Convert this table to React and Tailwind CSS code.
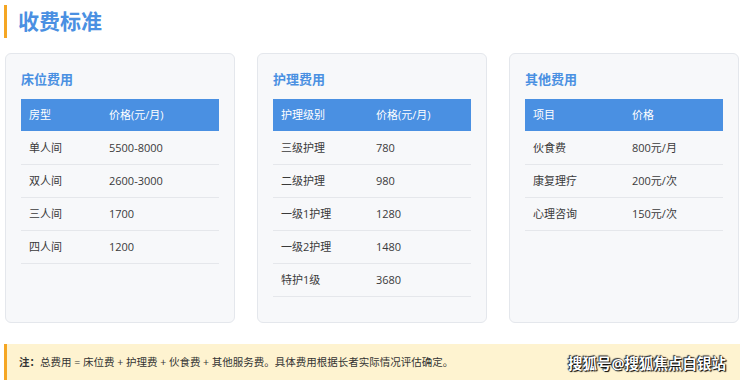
import React from 'react';

const font = { fontFamily: '"Open Sans", "Noto Sans CJK SC", sans-serif' };

const cards = [
  {
    title: '床位费用',
    cols: ['房型', '价格(元/月)'],
    colWidth: 'w-[80px]',
    rows: [
      ['单人间', '5500-8000'],
      ['双人间', '2600-3000'],
      ['三人间', '1700'],
      ['四人间', '1200'],
    ],
  },
  {
    title: '护理费用',
    cols: ['护理级别', '价格(元/月)'],
    colWidth: 'w-[95px]',
    rows: [
      ['三级护理', '780'],
      ['二级护理', '980'],
      ['一级1护理', '1280'],
      ['一级2护理', '1480'],
      ['特护1级', '3680'],
    ],
  },
  {
    title: '其他费用',
    cols: ['项目', '价格'],
    colWidth: 'w-[99px]',
    rows: [
      ['伙食费', '800元/月'],
      ['康复理疗', '200元/次'],
      ['心理咨询', '150元/次'],
    ],
  },
];

const FeeCard = ({ card }) => (
  <div className="w-[230px] bg-[#f7f8fa] border border-[#e4e7ec] rounded-md px-[15px] pt-[16px] pb-[25px]">
    <h3 className="text-[13px] leading-[18px] font-bold text-[#4a90e2] mb-[11px]">{card.title}</h3>
    <table className="w-full border-collapse text-[11px]">
      <thead>
        <tr className="bg-[#4a90e2] text-white h-[32px]">
          <th className={`${card.colWidth} text-left font-normal pl-2`}>{card.cols[0]}</th>
          <th className="text-left font-normal pl-2">{card.cols[1]}</th>
        </tr>
      </thead>
      <tbody>
        {card.rows.map(r => (
          <tr key={r[0]} className="h-[33px] border-b border-[#e5e7eb] text-[#3a3a3a]">
            <td className="pl-2 pt-[2px]">{r[0]}</td>
            <td className="pl-2 pt-[2px]">{r[1]}</td>
          </tr>
        ))}
      </tbody>
    </table>
  </div>
);

export default function App() {
  return (
    <div className="w-[740px] h-[380px] overflow-hidden bg-white" style={font}>
      <div className="flex items-center h-[33px] mt-[5px] ml-[4px] border-l-[3px] border-[#f5a623] pl-[11px]">
        <h1 className="text-[21px] font-bold text-[#4a90e2] leading-none">收费标准</h1>
      </div>

      <div className="flex gap-[22px] ml-[5px] mt-[15px]">
        {cards.map(c => <FeeCard key={c.title} card={c} />)}
      </div>

      <div className="relative mt-[21px] ml-[4px] h-[40px] bg-[#fef3d0] border-l-[3px] border-[#f5a623] flex items-center pl-[12px] pb-[1px]">
        <p className="text-[10.5px] text-[#333]">
          <span className="font-bold">注：</span>总费用 = 床位费 + 护理费 + 伙食费 + 其他服务费。具体费用根据长者实际情况评估确定。
        </p>
        <span className="absolute right-[14px] top-[11px] text-[14.5px] leading-[18px] text-white font-bold [text-shadow:0_0_1px_#000,1px_1px_1px_#000,-1px_-1px_1px_#333]">
          搜狐号@搜狐焦点白银站
        </span>
      </div>
    </div>
  );
}
